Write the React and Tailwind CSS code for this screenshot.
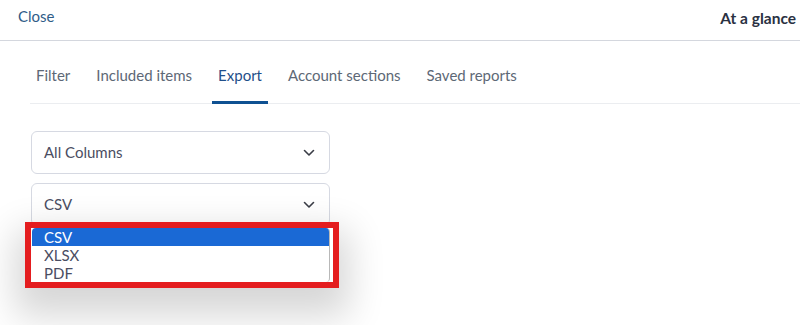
import React from "react";

function Chevron() {
  return (
    <svg width="12" height="8" viewBox="0 0 12 8" fill="none" className="text-[#3a3d46]">
      <path d="M1.5 1.5 L6 6 L10.5 1.5" stroke="currentColor" strokeWidth="1.6" strokeLinecap="round" strokeLinejoin="round" />
    </svg>
  );
}

function Select({ value, children }) {
  return (
    <div className="relative w-[299px]">
      <div className="h-[43px] rounded-[6px] border border-[#d6d9e2] bg-white flex items-center justify-between pl-[12px] pr-[14px]">
        <span className="text-[15px] text-[#4a4d62]">{value}</span>
        <Chevron />
      </div>
      {children}
    </div>
  );
}

export default function App() {
  const tabs = ["Filter", "Included items", "Export", "Account sections", "Saved reports"];
  return (
    <div className="w-[800px] h-[325px] bg-white overflow-hidden" style={{ fontFamily: "Lato, 'Open Sans', sans-serif" }}>
      <div className="h-[41px] border-b border-[#d4d7de] flex items-center justify-between pl-[18px] pr-[4px]">
        <span className="text-[15px] text-[#2f5c88] -mt-[7px]">Close</span>
        <span className="text-[15.5px] font-bold text-[#2a3142] -mt-[2px]">At a glance</span>
      </div>
      <div className="ml-[30px] pt-[24px] border-b border-[#ebedf0] flex gap-[14px]">
        {tabs.map((t) => (
          <div
            key={t}
            className={
              "px-[6px] leading-[20px] pb-[16px] -mb-px border-b-[3px] text-[15px] " +
              (t === "Export" ? "border-[#0f5192] text-[#1f4f8a]" : "border-transparent text-[#5d6876]")
            }
          >
            {t}
          </div>
        ))}
      </div>
      <div className="ml-[31px] mt-[27px] flex flex-col gap-[9px]">
        <Select value="All Columns" />
        <Select value="CSV">
          <div className="absolute left-[-6px] top-[39px] w-[314px] h-[66px] border-[6px] border-[#e41d1f] bg-white shadow-[0_18px_36px_10px_rgba(0,0,0,0.16)]">
            <div className="ml-[1px] mr-[3px] h-[54px] rounded-[4px] overflow-hidden bg-white border-r border-[#b8b8b8] text-[15px] leading-[18px]">
              <div className="h-[18px] bg-[#1a69d5] text-white pl-[12px]">CSV</div>
              <div className="h-[18px] text-[#4a4d62] pl-[12px]">XLSX</div>
              <div className="h-[18px] text-[#4a4d62] pl-[12px]">PDF</div>
            </div>
          </div>
        </Select>
      </div>
    </div>
  );
}
